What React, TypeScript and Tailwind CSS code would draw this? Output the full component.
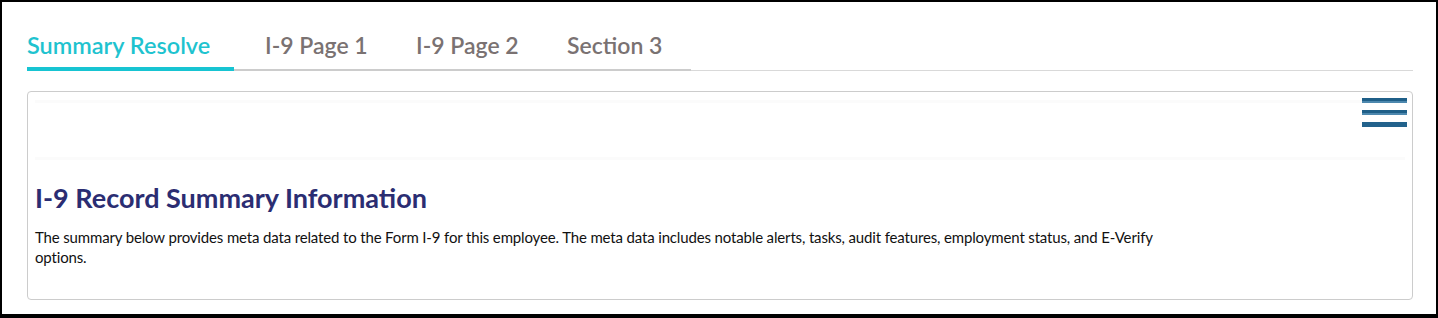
import React from "react"

const tabs = [
  { label: "Summary Resolve", width: "w-[207px]", pad: "pl-0", active: true },
  { label: "I-9 Page 1", width: "w-[151px]", pad: "pl-[31px]", active: false },
  { label: "I-9 Page 2", width: "w-[151px]", pad: "pl-[31px]", active: false },
  { label: "Section 3", width: "w-[155px]", pad: "pl-[31px]", active: false },
]

export default function App() {
  return (
    <div className="h-[318px] overflow-hidden border-2 border-b-4 border-black bg-white pl-[25px] pr-[23px] pt-[29px] font-['Lato',sans-serif]">
      {/* Tabs */}
      <div className="flex border-b border-[#d9d9d9]">
        <div className="-mb-px flex items-end">
          {tabs.map((t) => (
            <div
              key={t.label}
              className={
                t.active
                  ? `${t.width} ${t.pad} whitespace-nowrap border-b-4 border-[#17c4d2] pb-[8px] text-[23.5px] font-semibold leading-[28px] text-[#1fc3cf]`
                  : `${t.width} ${t.pad} whitespace-nowrap border-b-2 border-[#cccccc] pb-[10px] text-[23px] font-semibold leading-[28px] text-[#7a7272]`
              }
            >
              {t.label}
            </div>
          ))}
        </div>
      </div>

      {/* Card */}
      <div className="relative mt-5 h-[209px] rounded-[4px] border border-[#cccccc]">
        <div className="mx-[7px] mt-[8px] h-[60px] border-y-[3px] border-[#fbfbfb]" />
        <button className="absolute right-[5px] top-[6px] flex w-[45px] flex-col gap-[7px]" aria-label="Menu">
          <span className="block h-[5px] w-full border-b-2 border-[#4d88ae] bg-[#1f5f88]" />
          <span className="block h-[5px] w-full border-b-2 border-[#4d88ae] bg-[#1f5f88]" />
          <span className="block h-[5px] w-full bg-[#22628c]" />
        </button>

        <div className="px-[7px] pt-[22px]">
          <h2 className="text-[27px] font-bold leading-[32px] text-[#2b2d72]">I-9 Record Summary Information</h2>
          <p className="mt-[13px] w-[1150px] text-[15px] leading-[20px] tracking-[-0.15px] text-[#111111]">
            The summary below provides meta data related to the Form I-9 for this employee. The meta data includes notable alerts, tasks, audit features, employment status, and E-Verify options.
          </p>
        </div>
      </div>
    </div>
  )
}
